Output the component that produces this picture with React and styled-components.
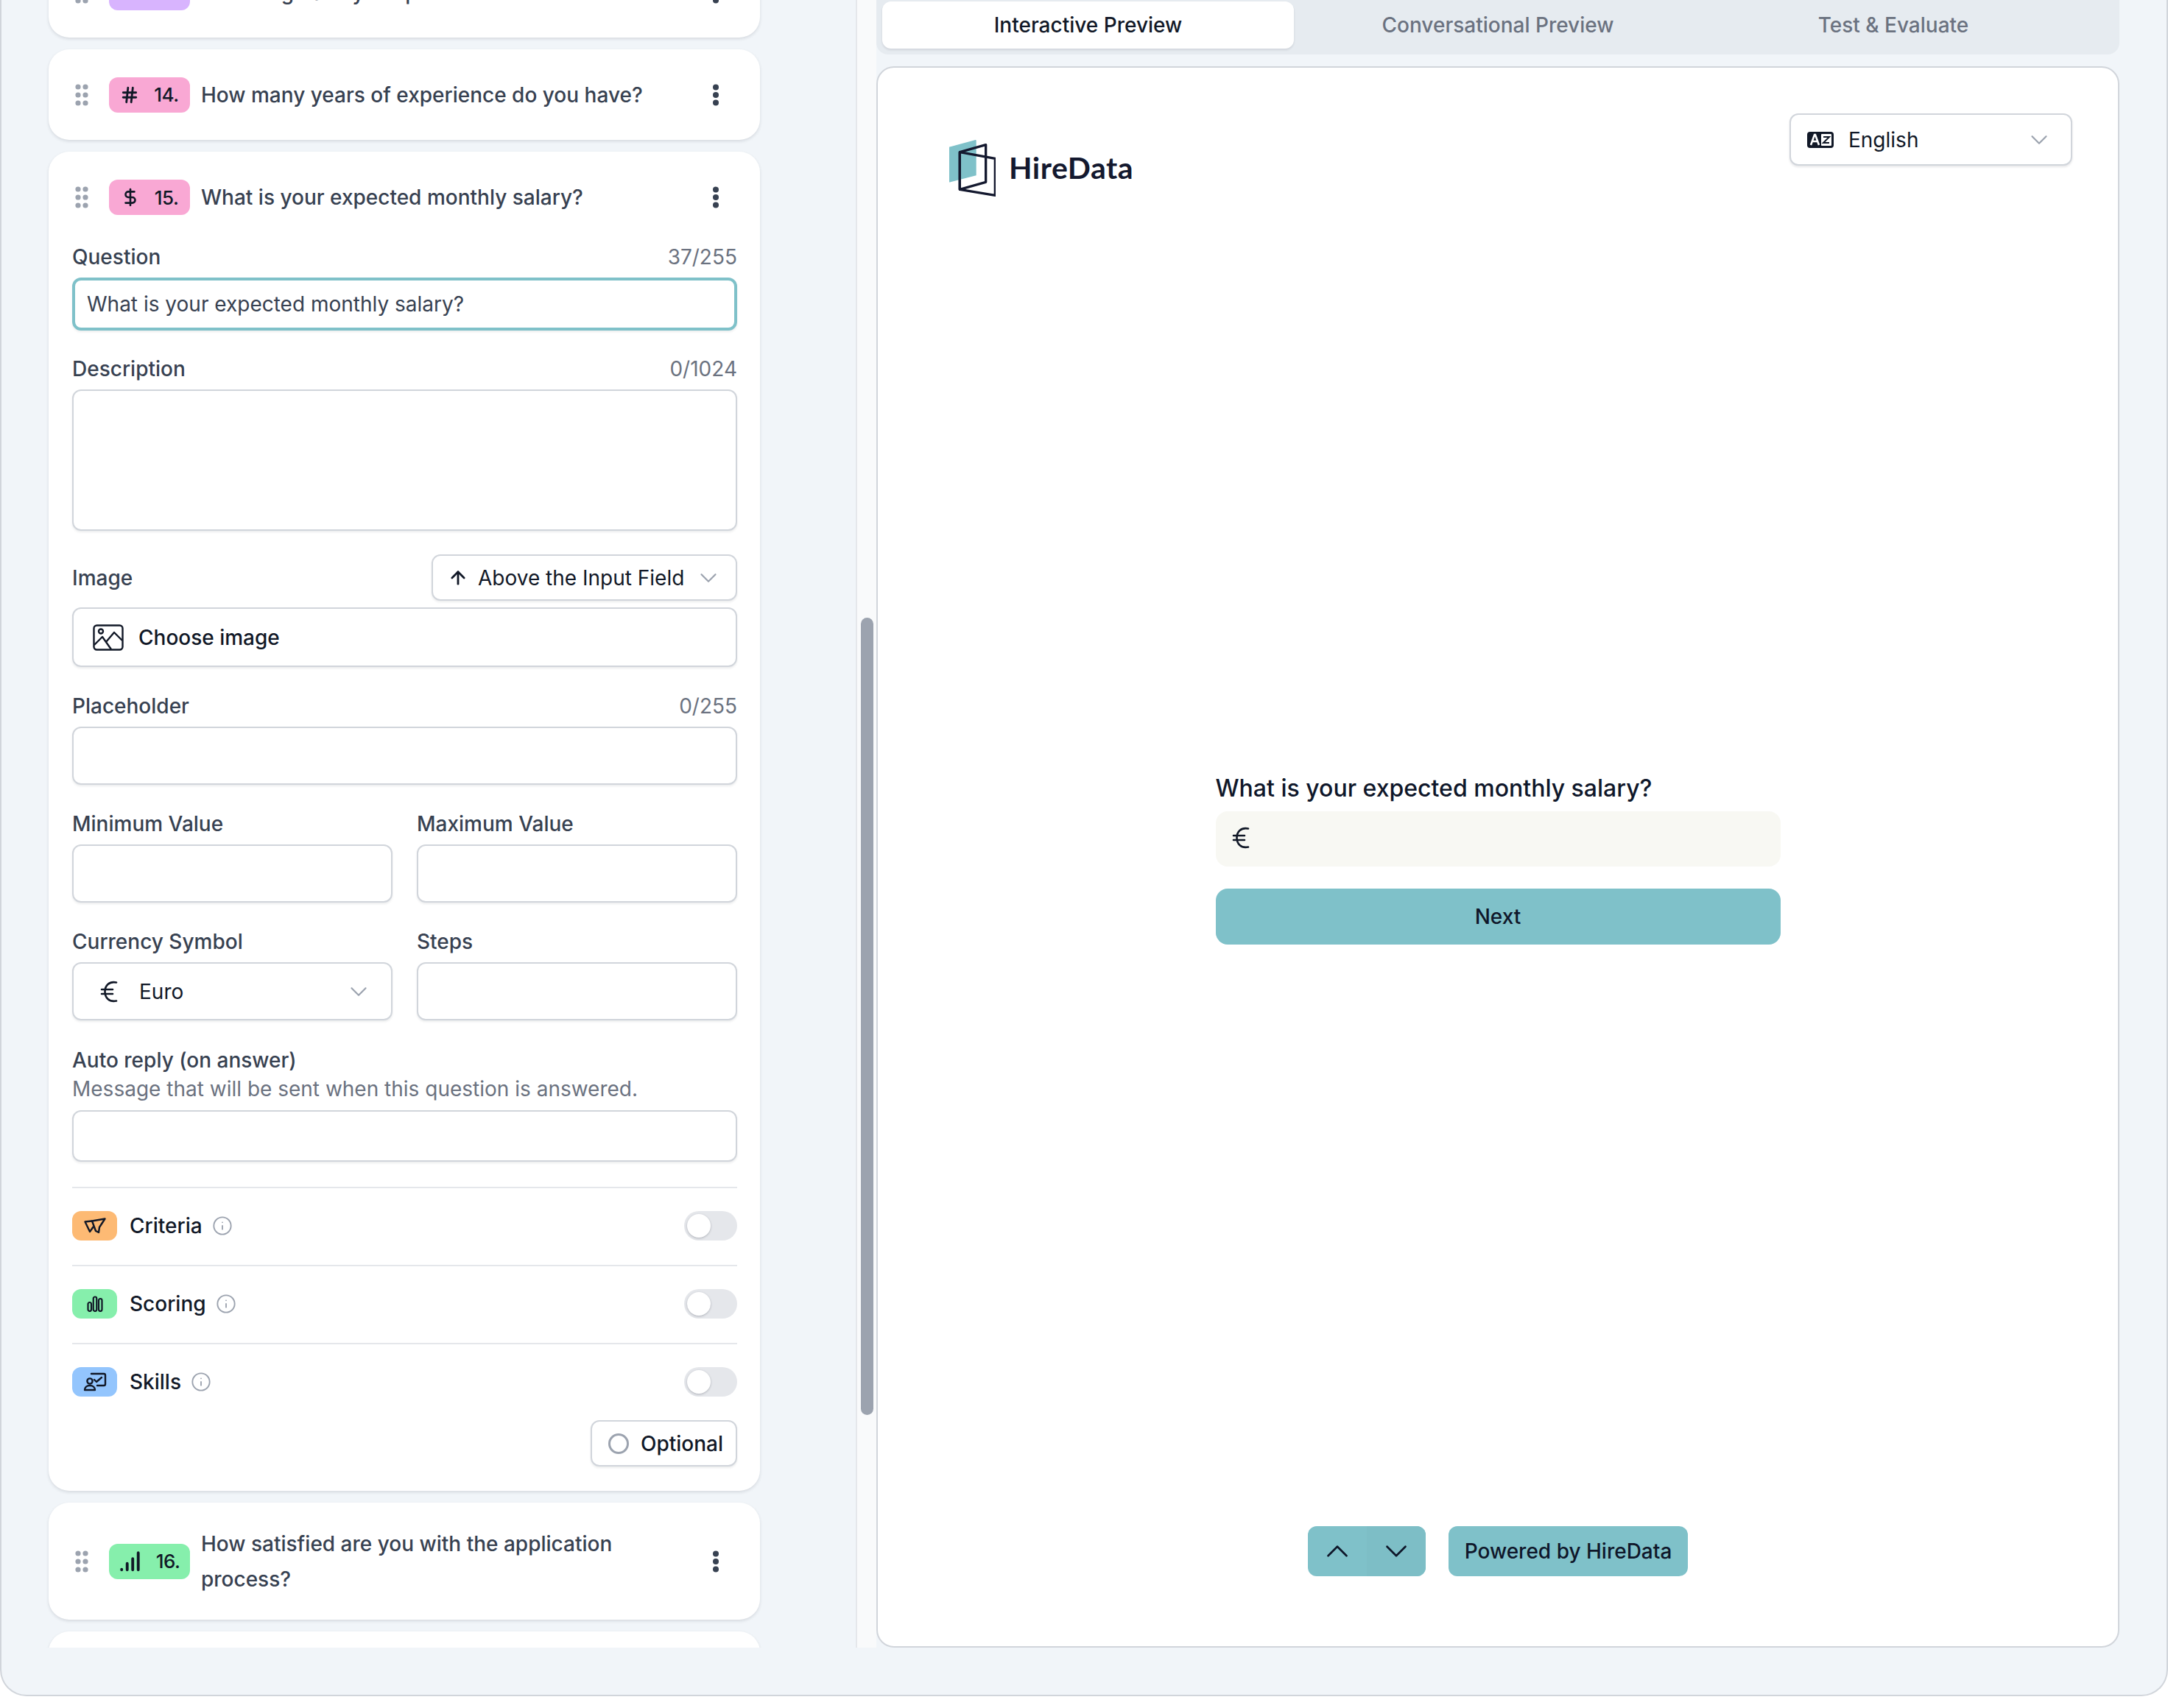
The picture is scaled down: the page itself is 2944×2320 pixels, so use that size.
import React from 'react'
import styled, { createGlobalStyle } from 'styled-components'
import { ArrowUp, ChevronDown, ChevronUp, DollarSign, Hash, Info } from 'lucide-react'

const GlobalStyle = createGlobalStyle`
  html, body { margin: 0; padding: 0; background: #fff; }
  body { font-family: Inter, "Liberation Sans", sans-serif; color: #111827; }
  * { box-sizing: border-box; }
`

const Shell = styled.div`
  height: 2304px;
  display: flex;
  background: #f1f5f9;
  border: 2px solid #d1d5db;
  border-top: none;
  border-radius: 0 0 36px 36px;
  overflow: hidden;
`
const ListColumn = styled.div`
  width: 1160px;
  height: 2238px;
  flex-shrink: 0;
  padding-left: 64px;
  overflow: hidden;
`
const Card = styled.div`
  width: 966px;
  margin-bottom: 16px;
  padding: 0 31px 0 32px;
  background: #fff;
  border-radius: 28px;
  box-shadow: 0 2px 4px rgba(17, 24, 39, 0.12);
  &:first-child { margin-top: -72px; }
`
const StubCard = styled(Card)`
  height: 60px;
`
const CardHead = styled.div`
  display: flex;
  align-items: center;
  min-height: ${p => (p.$tall ? '159px' : '123px')};
  padding-left: 4px;
  ${p => p.$open && 'min-height: 86px; padding-top: 38px;'}
`
const Grip = styled.svg`
  width: 18px;
  height: 30px;
  flex-shrink: 0;
  margin-right: 28px;
`
const Badge = styled.div`
  display: flex;
  align-items: center;
  justify-content: center;
  gap: 20px;
  width: 110px;
  height: 48px;
  flex-shrink: 0;
  border-radius: 12px;
  background: ${p => p.$bg};
  color: #111827;
  font-size: 26px;
  font-weight: 500;
  letter-spacing: -0.5px;
`
const Title = styled.div`
  flex: 1;
  margin-left: 15px;
  color: #374151;
  font-size: 28px;
  font-weight: 500;
  line-height: 48px;
`
const Kebab = styled.svg`
  width: 10px;
  height: 30px;
  flex-shrink: 0;
  margin: 0 24px 0 90px;
`
const Form = styled.div`
  display: flex;
  flex-direction: column;
  padding: 37px 0 33px;
`
const Field = styled.div`
  margin-bottom: ${p => p.$mb || 32}px;
`
const LabelRow = styled.div`
  display: flex;
  justify-content: space-between;
  height: 40px;
  margin-bottom: ${p => (p.$flush ? 0 : 8)}px;
  line-height: 40px;
`
const Label = styled.span`
  color: #374151;
  font-size: 28px;
  font-weight: 500;
`
const Counter = styled.span`
  color: #6b7280;
  font-size: 28px;
`
const Input = styled.div`
  display: flex;
  align-items: center;
  height: ${p => p.$h || 80}px;
  padding: 0 20px;
  background: #fff;
  border: 2px solid #d1d5db;
  border-radius: 12px;
  box-shadow: 0 2px 3px rgba(17, 24, 39, 0.08);
  color: #374151;
  font-size: 28px;
`
const FocusInput = styled(Input)`
  border: 4px solid #7fc1c9;
  padding: 0 16px;
`
const ImageHead = styled.div`
  display: flex;
  align-items: center;
  justify-content: space-between;
  margin-bottom: 9px;
`
const PlacementSelect = styled.div`
  display: flex;
  align-items: center;
  width: 415px;
  height: 63px;
  padding: 0 18px 0 20px;
  background: #fff;
  border: 2px solid #d1d5db;
  border-radius: 12px;
  box-shadow: 0 2px 3px rgba(17, 24, 39, 0.08);
  color: #111827;
  font-size: 28px;
  svg:first-child { margin-right: 13px; }
  svg:last-child { margin-left: auto; color: #9ca3af; }
`
const ChooseImage = styled(Input)`
  gap: 20px;
  padding: 0 26px;
  color: #111827;
  font-weight: 500;
`
const TwoCols = styled.div`
  display: grid;
  grid-template-columns: 435px 435px;
  column-gap: 33px;
  margin-bottom: 32px;
`
const CurrencySelect = styled(Input)`
  padding: 0 25px 0 36px;
  color: #111827;
  span { margin-left: 29px; }
  svg:last-child { margin-left: auto; color: #9ca3af; }
`
const Hint = styled.div`
  height: 38px;
  margin-bottom: 10px;
  color: #6b7280;
  font-size: 28px;
  line-height: 38px;
`
const ToggleRow = styled.div`
  display: flex;
  align-items: center;
  padding: 31px 0 33px;
  border-top: 2px solid #e5e7eb;
`
const FeatureIcon = styled.div`
  display: flex;
  align-items: center;
  justify-content: center;
  width: 61px;
  height: 40px;
  border-radius: 12px;
  background: ${p => p.$bg};
`
const FeatureName = styled.span`
  margin: 0 13px 0 17px;
  color: #111827;
  font-size: 28px;
  font-weight: 500;
`
const Toggle = styled.div`
  width: 72px;
  height: 40px;
  margin-left: auto;
  padding: 4px;
  background: #e5e7eb;
  border-radius: 20px;
  &::before {
    content: '';
    display: block;
    width: 32px;
    height: 32px;
    background: #fff;
    border-radius: 50%;
    box-shadow: 0 1px 3px rgba(17, 24, 39, 0.25);
  }
`
const OptionalButton = styled.div`
  display: flex;
  align-items: center;
  align-self: flex-end;
  gap: 16px;
  width: 199px;
  height: 63px;
  margin-top: -1px;
  padding: 0 22px;
  background: #fff;
  border: 2px solid #d1d5db;
  border-radius: 12px;
  box-shadow: 0 2px 3px rgba(17, 24, 39, 0.08);
  color: #111827;
  font-size: 28px;
  font-weight: 500;
  white-space: nowrap;
`
const RadioDot = styled.span`
  flex-shrink: 0;
  width: 28px;
  height: 28px;
  border: 3px solid #9ca3af;
  border-radius: 50%;
`
const ScrollGutter = styled.div`
  position: relative;
  width: 28px;
  height: 2238px;
  flex-shrink: 0;
  background: #f9fafb;
  border-left: 2px solid #e5e7eb;
`
const ScrollThumb = styled.div`
  position: absolute;
  top: 839px;
  left: 5px;
  width: 17px;
  height: 1083px;
  background: #9ca3af;
  border-radius: 9px;
`
const PreviewColumn = styled.div`
  flex: 1;
  height: 2238px;
  display: flex;
  flex-direction: column;
  padding-right: 64px;
`
const TabBar = styled.div`
  display: grid;
  grid-template-columns: 559px 554px 520px;
  height: 74px;
  padding: 2px 8px 8px;
  background: #e6ebf0;
  border-radius: 0 0 16px 16px;
`
const Tab = styled.div`
  display: flex;
  align-items: center;
  justify-content: center;
  background: ${p => (p.$active ? '#fff' : 'transparent')};
  border-radius: 12px;
  box-shadow: ${p => (p.$active ? '0 2px 3px rgba(17,24,39,.1)' : 'none')};
  color: ${p => (p.$active ? '#111827' : '#6b7280')};
  font-size: 28px;
  font-weight: 500;
`
const PreviewCard = styled.div`
  flex: 1;
  display: flex;
  flex-direction: column;
  margin-top: 16px;
  background: #fff;
  border: 2px solid #d1d5db;
  border-radius: 24px;
`
const PreviewHead = styled.div`
  display: flex;
  justify-content: space-between;
  align-items: flex-start;
  padding: 62px 62px 0 96px;
`
const Logo = styled.div`
  display: flex;
  align-items: center;
  gap: 18px;
  margin-top: 33px;
`
const LogoText = styled.span`
  color: #14192f;
  font-family: Lato, Inter, sans-serif;
  font-size: 41px;
  font-weight: 700;
  letter-spacing: 0.5px;
`
const LanguageSelect = styled.div`
  display: flex;
  align-items: center;
  width: 384px;
  height: 71px;
  padding: 0 24px 0 22px;
  background: #fff;
  border: 2px solid #d1d5db;
  border-radius: 12px;
  box-shadow: 0 2px 3px rgba(17, 24, 39, 0.1);
  color: #111827;
  font-size: 28px;
  span { margin-left: 20px; }
  svg:last-child { margin-left: auto; color: #9ca3af; }
`
const Quiz = styled.div`
  width: 767px;
  margin: 780px auto 0;
`
const QuizTitle = styled.div`
  height: 48px;
  margin-bottom: 7px;
  color: #0f172a;
  font-size: 32px;
  font-weight: 500;
  line-height: 48px;
`
const QuizInput = styled.div`
  display: flex;
  align-items: center;
  height: 75px;
  padding: 0 0 4px 22px;
  background: #f8f8f3;
  border-radius: 16px;
  color: #0f172a;
`
const NextButton = styled.div`
  display: flex;
  align-items: center;
  justify-content: center;
  height: 76px;
  margin-top: 30px;
  background: #7fc1c9;
  border-radius: 16px;
  color: #0f172a;
  font-size: 28px;
  font-weight: 500;
`
const PreviewFoot = styled.div`
  display: flex;
  justify-content: center;
  gap: 31px;
  margin-top: auto;
  padding-bottom: 95px;
`
const NavGroup = styled.div`
  display: flex;
  width: 160px;
  height: 68px;
  background: #7fc1c9;
  border-radius: 12px;
  overflow: hidden;
`
const NavButton = styled.div`
  flex: 1;
  display: flex;
  align-items: center;
  justify-content: center;
  color: #0f172a;
  & + & { background: #7dbec6; }
`
const Powered = styled.div`
  display: flex;
  align-items: center;
  height: 68px;
  padding: 0 22px;
  background: #7fc1c9;
  border-radius: 12px;
  color: #0f172a;
  font-size: 28px;
  font-weight: 500;
`

const GripIcon = () => (
  <Grip viewBox="0 0 18 30" fill="#9ca3af">
    {[4, 15, 26].map(y => (
      <React.Fragment key={y}>
        <circle cx="4" cy={y} r="3.6" />
        <circle cx="14" cy={y} r="3.6" />
      </React.Fragment>
    ))}
  </Grip>
)

const KebabIcon = () => (
  <Kebab viewBox="0 0 10 30" fill="#374151">
    <circle cx="5" cy="4.500" r="4" />
    <circle cx="5" cy="15" r="4" />
    <circle cx="5" cy="25.500" r="4" />
  </Kebab>
)

const SignalIcon = () => (
  <svg width="30" height="28" viewBox="0 0 28 26" fill="none" stroke="#111827" strokeWidth="3.6" strokeLinecap="round">
    <path d="M3 23.500v-.5M10 23.500v-8M17 23.500v-14M24 23.500V2" />
  </svg>
)

const EuroIcon = () => (
  <svg width="24" height="30" viewBox="0 0 24 30" fill="none" stroke="#111827" strokeWidth="2.6" strokeLinecap="round">
    <path d="M22 2.500C12 0.500 6.500 7 6.500 15S12 29.500 22 27.500" />
    <path d="M2 12h15M2 18h15" />
  </svg>
)

const ImageIcon = () => (
  <svg width="42" height="36" viewBox="0 0 42 36" fill="none" stroke="#111827" strokeWidth="2.4" strokeLinejoin="round">
    <rect x="1.500" y="1.500" width="39" height="33" rx="4" />
    <circle cx="11" cy="9.500" r="3" />
    <path d="M2 28l11-11 12 17M18 24l11-13 11 11" />
  </svg>
)

const FunnelIcon = () => (
  <svg width="30" height="22" viewBox="0 0 30 22" fill="none" stroke="#111827" strokeWidth="2.400" strokeLinejoin="round">
    <path d="M11 4.500L28.500 1.500 21 13l-1 7-4-2z" />
    <path d="M11 4.500L1.500 5.500 8 19l5-7" />
  </svg>
)

const BarsIcon = () => (
  <svg width="22" height="22" viewBox="0 0 22 22" fill="none" stroke="#111827" strokeWidth="2.200">
    <rect x="1.500" y="9" width="4.500" height="12" rx="2.250" />
    <rect x="8.750" y="1.500" width="4.500" height="19.500" rx="2.250" />
    <rect x="16" y="4" width="4.500" height="17" rx="2.250" />
  </svg>
)

const SkillsIcon = () => (
  <svg width="32" height="26" viewBox="0 0 32 26" fill="none" stroke="#111827" strokeWidth="2.400" strokeLinecap="round" strokeLinejoin="round">
    <path d="M11 2h17a2 2 0 0 1 2 2v12a2 2 0 0 1-2 2h-9" />
    <circle cx="9" cy="12" r="3.600" />
    <path d="M2 24c0-3.500 3-6 7-6s7 2.500 7 6z" />
    <path d="M15 10l3 3 7-6" />
  </svg>
)

const LanguageIcon = () => (
  <svg width="36" height="22" viewBox="0 0 36 22">
    <rect width="36" height="22" rx="4" fill="#111827" />
    <rect x="19" y="3" width="14" height="16" rx="1" fill="#fff" />
    <path d="M5 18l5-14h1l5 14M7 13h7" fill="none" stroke="#fff" strokeWidth="2.600" />
    <path d="M22 7h8l-8 8h8" fill="none" stroke="#111827" strokeWidth="2" />
  </svg>
)

const LogoIcon = () => (
  <svg width="64" height="80" viewBox="0 0 192 238" fill="none">
    <path d="M8 36L110 8a3 3 0 0 1 3 3v142L8 180a3 3 0 0 1-5-3V40a4 4 0 0 1 5-4z" fill="#7fc1c9" />
    <g stroke="#14192f" strokeWidth="10" strokeLinejoin="round">
      <path d="M46 58L152 28V180L46 210z" />
      <path d="M46 58L190 84V234L46 210z" />
    </g>
  </svg>
)

const features = [
  { name: 'Criteria', bg: '#fdba74', icon: <FunnelIcon /> },
  { name: 'Scoring', bg: '#86efac', icon: <BarsIcon /> },
  { name: 'Skills', bg: '#93c5fd', icon: <SkillsIcon /> },
]

function Question({ color, icon, number, text, tall }) {
  return (
    <Card>
      <CardHead $tall={tall}>
        <GripIcon />
        <Badge $bg={color}>{icon}<span>{number}</span></Badge>
        <Title>{text}</Title>
        <KebabIcon />
      </CardHead>
    </Card>
  )
}

function LabelledInput({ label, count, h, mb }) {
  return (
    <Field $mb={mb}>
      <LabelRow>
        <Label>{label}</Label>
        {count && <Counter>{count}</Counter>}
      </LabelRow>
      <Input $h={h} />
    </Field>
  )
}

export default function App() {
  return (
    <>
      <GlobalStyle />
      <Shell>
        <ListColumn>
          <Question color="#d8b4fe" text="How long have you spent?" />
          <Question color="#f9a8d4" number="14." text="How many years of experience do you have?" icon={<Hash size={26} strokeWidth={2.6} />} />

          <Card>
            <CardHead $open>
              <GripIcon />
              <Badge $bg="#f9a8d4"><DollarSign size={26} strokeWidth={2.4} /><span>15.</span></Badge>
              <Title>What is your expected monthly salary?</Title>
              <KebabIcon />
            </CardHead>
            <Form>
              <Field>
                <LabelRow>
                  <Label>Question</Label>
                  <Counter>37/255</Counter>
                </LabelRow>
                <FocusInput $h={72}>What is your expected monthly salary?</FocusInput>
              </Field>
              <LabelledInput label="Description" count="0/1024" h={192} />

              <Field $mb={33}>
                <ImageHead>
                  <Label>Image</Label>
                  <PlacementSelect>
                    <ArrowUp size={28} strokeWidth={2.4} />
                    <span>Above the Input Field</span>
                    <ChevronDown size={38} strokeWidth={1.4} />
                  </PlacementSelect>
                </ImageHead>
                <ChooseImage $h={81}><ImageIcon />Choose image</ChooseImage>
              </Field>

              <LabelledInput label="Placeholder" count="0/255" h={79} mb={33} />

              <TwoCols>
                <LabelledInput label="Minimum Value" h={79} mb={1} />
                <LabelledInput label="Maximum Value" h={79} mb={1} />
              </TwoCols>
              <TwoCols>
                <Field $mb={2}>
                  <LabelRow><Label>Currency Symbol</Label></LabelRow>
                  <CurrencySelect $h={79}>
                    <EuroIcon />
                    <span>Euro</span>
                    <ChevronDown size={38} strokeWidth={1.4} />
                  </CurrencySelect>
                </Field>
                <LabelledInput label="Steps" h={79} mb={2} />
              </TwoCols>

              <Field $mb={34}>
                <LabelRow $flush><Label>Auto reply (on answer)</Label></LabelRow>
                <Hint>Message that will be sent when this question is answered.</Hint>
                <Input $h={70} />
              </Field>

              {features.map(f => (
                <ToggleRow key={f.name}>
                  <FeatureIcon $bg={f.bg}>{f.icon}</FeatureIcon>
                  <FeatureName>{f.name}</FeatureName>
                  <Info size={28} strokeWidth={1.6} color="#9ca3af" />
                  <Toggle />
                </ToggleRow>
              ))}

              <OptionalButton><RadioDot />Optional</OptionalButton>
            </Form>
          </Card>

          <Question color="#86efac" number="16." tall icon={<SignalIcon />} text="How satisfied are you with the application process?" />
          <StubCard />
        </ListColumn>

        <ScrollGutter><ScrollThumb /></ScrollGutter>

        <PreviewColumn>
          <TabBar>
            <Tab $active>Interactive Preview</Tab>
            <Tab>Conversational Preview</Tab>
            <Tab>Test &amp; Evaluate</Tab>
          </TabBar>
          <PreviewCard>
            <PreviewHead>
              <Logo>
                <LogoIcon />
                <LogoText>HireData</LogoText>
              </Logo>
              <LanguageSelect>
                <LanguageIcon />
                <span>English</span>
                <ChevronDown size={38} strokeWidth={1.4} />
              </LanguageSelect>
            </PreviewHead>

            <Quiz>
              <QuizTitle>What is your expected monthly salary?</QuizTitle>
              <QuizInput><EuroIcon /></QuizInput>
              <NextButton>Next</NextButton>
            </Quiz>

            <PreviewFoot>
              <NavGroup>
                <NavButton><ChevronUp size={50} strokeWidth={1.3} /></NavButton>
                <NavButton><ChevronDown size={50} strokeWidth={1.3} /></NavButton>
              </NavGroup>
              <Powered>Powered by HireData</Powered>
            </PreviewFoot>
          </PreviewCard>
        </PreviewColumn>
      </Shell>
    </>
  )
}
